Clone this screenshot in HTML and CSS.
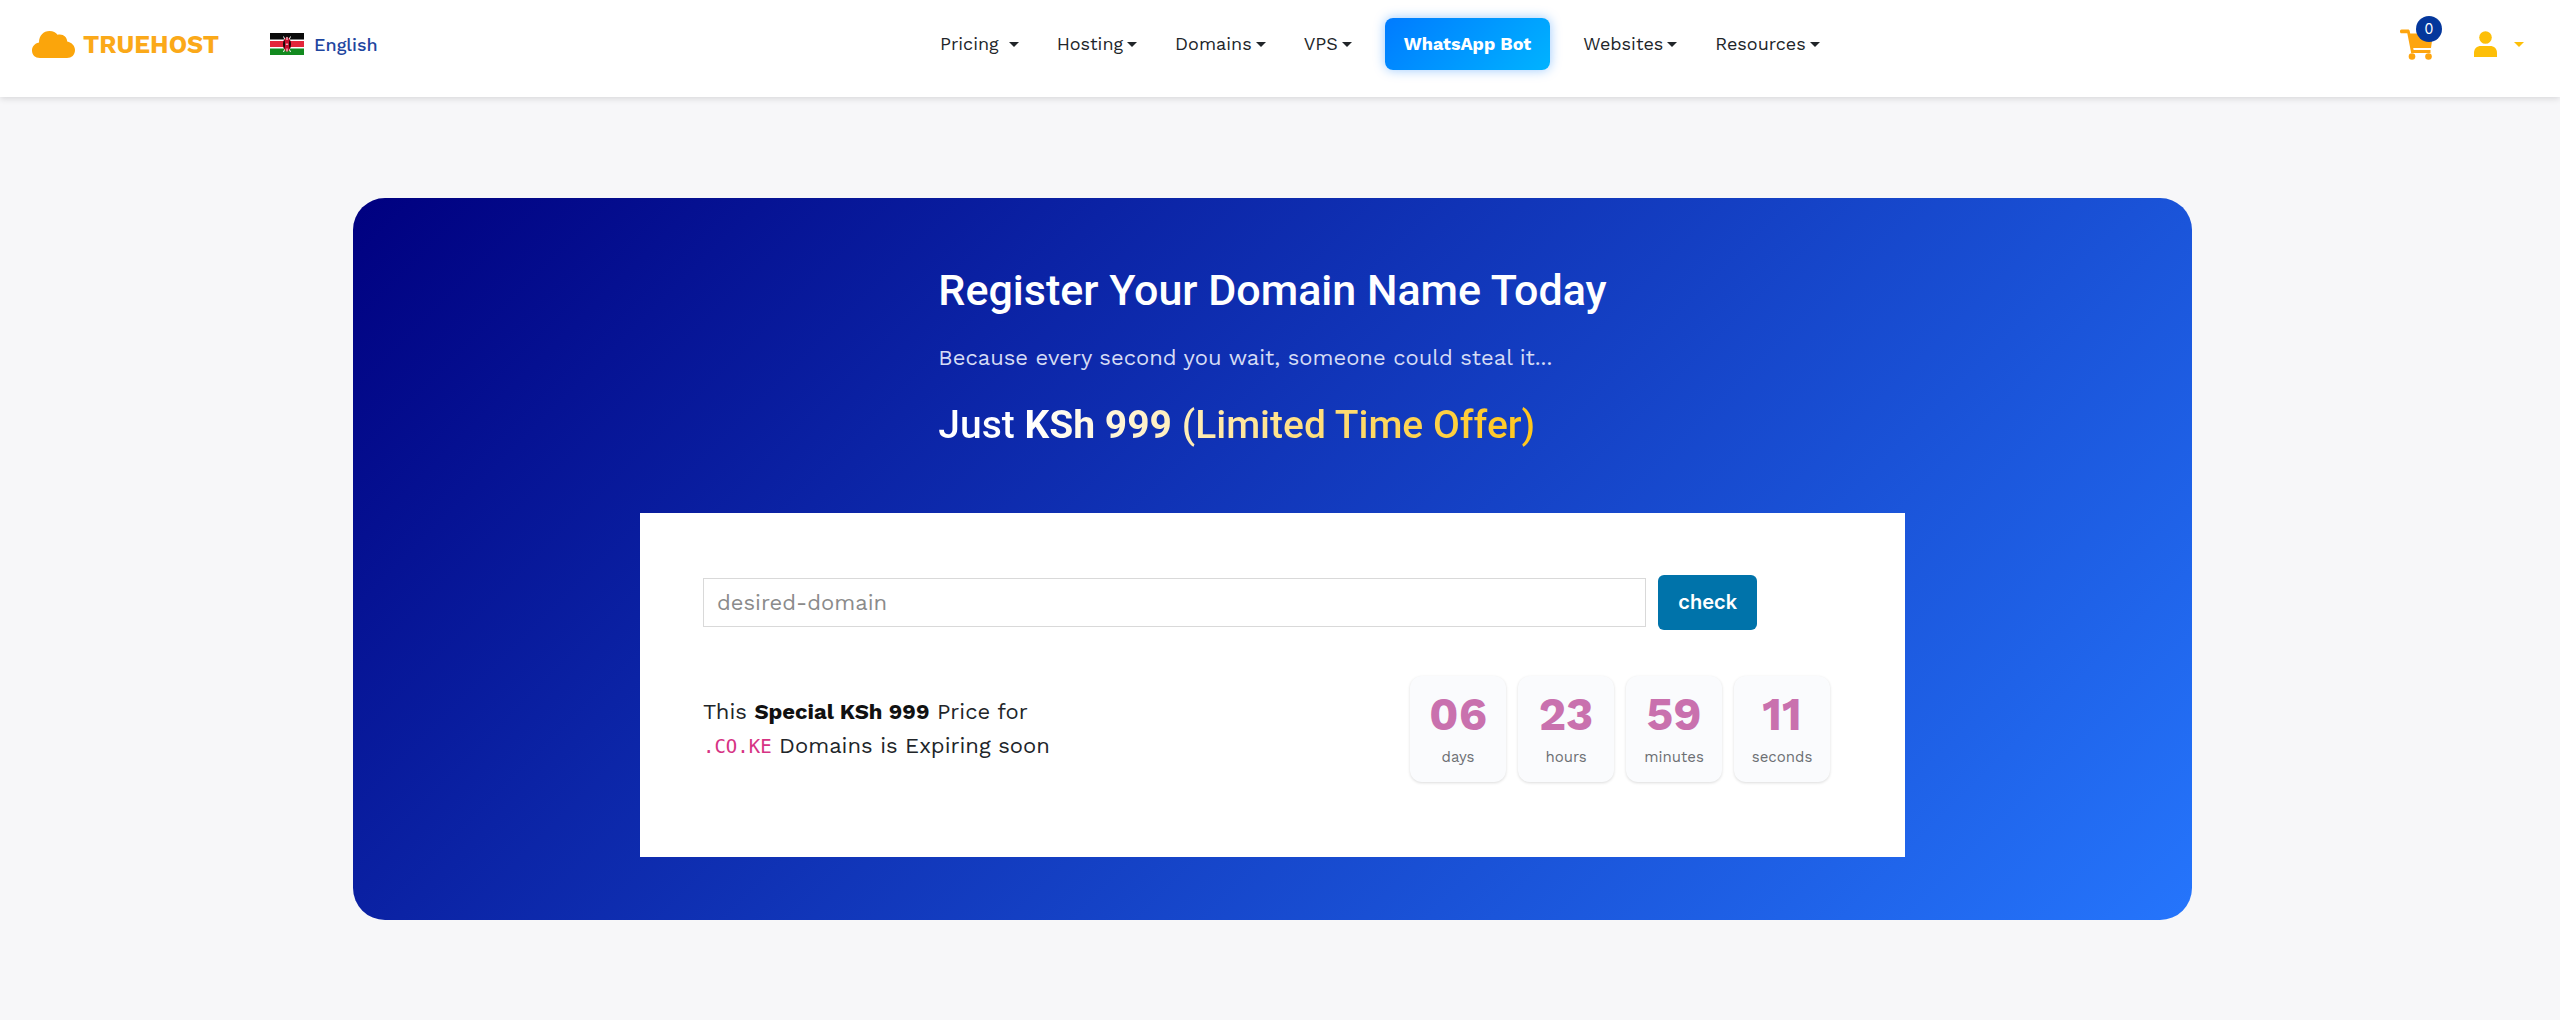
FILE: index.html
```html
<!DOCTYPE html>
<html lang="en">

<head>
    <meta charset="UTF-8">
    <meta name="viewport" content="width=device-width, initial-scale=1.0">
    <title>Register Your Domain Name Today - Truehost</title>
    <link rel="stylesheet" href="styles.css">
</head>

<body>
    <header class="navbar">
        <div class="nav-left">
            <a href="#" class="logo">
                <svg class="logo-cloud" viewBox="0 0 43 27" aria-hidden="true">
                    <path fill="#fba50b" d="M8 27C3 27 0 24 0 19.500C0 15.500 2.500 12.500 7 11.500C7 4.500 11.500 0 17.500 0C21 0 24 1.300 25.500 3.800C31 2.500 35 6 35.200 10.500C40 11.500 43 15 43 19C43 24 39.500 27 35 27Z" />
                </svg>
                <span>TRUEHOST</span>
            </a>
            <a href="#" class="language">
                <svg class="flag" viewBox="0 0 34 22" aria-hidden="true">
                    <rect width="34" height="22" fill="#fff" />
                    <rect width="34" height="6.500" fill="#0b0b0b" />
                    <rect y="8" width="34" height="6" fill="#e3263a" />
                    <rect y="15.500" width="34" height="6.500" fill="#128a1f" />
                    <path d="M13.500 3.500L20.500 19M20.500 3.500L13.500 19" stroke="#fff" stroke-width="1" />
                    <path d="M17 3.500C14 6 13 8.500 13 11.200C13 14 14 16.500 17 19C20 16.500 21 14 21 11.200C21 8.500 20 6 17 3.500Z" fill="#c8102e" />
                    <path d="M14.300 6.500C12.600 9.500 12.600 13 14.300 16C15.300 13 15.300 9.500 14.300 6.500ZM19.700 6.500C21.400 9.500 21.400 13 19.700 16C18.700 13 18.700 9.500 19.700 6.500Z" fill="#160808" />
                    <path d="M17 4V7M17 15.500V18.500M15.800 11.200H18.200" stroke="#fff" stroke-width="1" />
                </svg>
                <span>English</span>
            </a>
        </div>

        <nav class="menu">
            <a href="#" class="caret wide">Pricing</a>
            <a href="#" class="caret">Hosting</a>
            <a href="#" class="caret">Domains</a>
            <a href="#" class="caret">VPS</a>
            <a href="#" class="whatsapp">WhatsApp Bot</a>
            <a href="#" class="caret">Websites</a>
            <a href="#" class="caret">Resources</a>
        </nav>

        <div class="nav-right">
            <a href="#" class="cart" aria-label="Cart">
                <svg width="34" height="31" viewBox="0 0 34 31" aria-hidden="true">
                    <path fill="#fda50f" d="M1.500 0.500H8C9 0.500 9.500 1 9.700 2L10.200 4.500H33L31 19H13.200L13.600 21H30.500V24H11.200L7.300 4.200H1.500C0.500 4.200 0 3.500 0 2.400C0 1.200 0.500 0.500 1.500 0.500Z" />
                    <circle cx="12" cy="27.500" r="3.300" fill="#fda50f" />
                    <circle cx="28.500" cy="27.500" r="3.300" fill="#fda50f" />
                </svg>
                <span class="badge">0</span>
            </a>
            <a href="#" class="account caret" aria-label="Account">
                <svg width="23" height="26" viewBox="0 0 23 26" aria-hidden="true">
                    <circle cx="11.500" cy="6.500" r="6.300" fill="#fdbf08" />
                    <path fill="#fdbf08" d="M0 26V22C0 17.500 3 15 7 15H16C20 15 23 17.500 23 22V26Z" />
                </svg>
            </a>
        </div>
    </header>

    <main>
        <section class="hero">
            <div class="intro">
                <h1>Register Your Domain Name Today</h1>
                <p>Because every second you wait, someone could steal it...</p>
                <h2>Just <strong>KSh 999</strong> (Limited Time Offer)</h2>
            </div>

            <div class="box">
                <form action="#" class="search">
                    <input type="text" name="domain" id="domain" placeholder="desired-domain" aria-label="Domain name">
                    <button type="submit">check</button>
                </form>

                <div class="offer">
                    <p>This <strong>Special KSh 999</strong> Price for<br>
                        <code>.CO.KE</code> Domains is Expiring soon</p>

                    <div class="countdown">
                        <div class="unit"><b>06</b><span>days</span></div>
                        <div class="unit"><b>23</b><span>hours</span></div>
                        <div class="unit"><b>59</b><span>minutes</span></div>
                        <div class="unit"><b>11</b><span>seconds</span></div>
                    </div>
                </div>
            </div>
        </section>
    </main>
</body>

</html>
```
FILE: styles.css
```css
* {
    margin: 0;
    padding: 0;
    box-sizing: border-box;
}

body {
    font-family: "Work Sans", Inter, sans-serif;
    font-size: 22px;
    color: #212529;
    background-color: #f7f7f9;
}

a {
    text-decoration: none;
    color: inherit;
}

/* navbar */
.navbar {
    display: flex;
    align-items: center;
    padding: 18px 36px 27px 32px;
    background-color: #fff;
    box-shadow: 0 2px 6px rgba(0, 0, 0, 0.12);
}

.nav-left {
    display: flex;
    align-items: center;
    gap: 51px;
    width: 889px;
}

.logo {
    display: flex;
    align-items: center;
    gap: 8px;
    font-size: 25px;
    font-weight: 700;
    color: #fba919;
}

.logo-cloud {
    width: 43px;
    height: 27px;
}

.language {
    display: flex;
    align-items: center;
    gap: 10px;
    font-size: 18px;
    font-weight: 500;
    color: #1f469f;
}

.flag {
    width: 34px;
    height: 22px;
}

.menu {
    display: flex;
    align-items: center;
    font-size: 18px;
}

.menu a {
    padding: 0 19px;
    line-height: 52px;
}

.caret {
    display: flex;
    align-items: center;
    gap: 4px;
}

.caret::after {
    content: "";
    border-top: 5px solid currentColor;
    border-left: 5px solid transparent;
    border-right: 5px solid transparent;
}

.menu .wide {
    gap: 10px;
}

.menu .whatsapp {
    margin: 0 14px;
    border-radius: 8px;
    color: #fff;
    font-weight: 700;
    background: linear-gradient(135deg, #007bff, #00b3ff);
    box-shadow: 0 0 12px rgba(0, 123, 255, 0.4);
}

.nav-right {
    display: flex;
    align-items: center;
    gap: 40px;
    margin-left: auto;
}

.cart {
    position: relative;
    display: flex;
}

.badge {
    position: absolute;
    top: -13px;
    right: -8px;
    width: 26px;
    border-radius: 50%;
    line-height: 26px;
    font-family: Inter, sans-serif;
    font-size: 14px;
    text-align: center;
    color: #fff;
    background-color: #04379c;
}

.account {
    gap: 17px;
    color: #fdbf08;
}

/* hero */
main {
    padding: 101px 15px 100px 0;
}

.hero {
    width: 72.25%;
    min-width: 1300px;
    margin: auto;
    padding: 64px 0 63px;
    border-radius: 32px;
    background: linear-gradient(135deg, #000080, #2575fc);
}

.intro {
    width: fit-content;
    margin: 0 auto 61px;
    color: #fff;
}

h1,
h2 {
    font-family: Roboto, sans-serif;
    font-weight: 500;
}

h1 {
    font-size: 43px;
    line-height: 56px;
}

.intro p {
    margin: 23px 0 24px;
    line-height: 34px;
    color: #d5dcf5;
}

h2 {
    width: fit-content;
    font-size: 39px;
    line-height: 53px;
    color: transparent;
    background: linear-gradient(90deg, #fff 15%, #ffc61a);
    background-clip: text;
}

.box {
    width: 68.8%;
    margin: auto;
    padding: 62px 75px 75px 63px;
    background-color: #fff;
}

.search {
    display: flex;
    align-items: center;
    gap: 12px;
    margin-bottom: 46px;
}

.search input {
    width: 83.7%;
    height: 49px;
    padding: 0 13px;
    border: 1px solid #d9d9d9;
    font: inherit;
}

.search input::placeholder {
    color: #8b8b8b;
}

.search button {
    padding: 0 20px;
    border: none;
    border-radius: 6px;
    font-family: Inter, sans-serif;
    font-size: 20px;
    line-height: 55px;
    font-weight: 600;
    color: #fff;
    background-color: #0073aa;
}

.offer {
    display: flex;
    justify-content: space-between;
    align-items: center;
    line-height: 34px;
}

.offer strong {
    color: #111;
}

code {
    font-family: "DejaVu Sans Mono", monospace;
    font-size: 19px;
    color: #d63384;
}

.countdown {
    display: flex;
    gap: 12px;
}

.unit {
    display: flex;
    flex-direction: column;
    align-items: center;
    width: 96px;
    padding: 14px 0 6px;
    border-radius: 12px;
    background-color: #fafbfd;
    box-shadow: 0 1px 3px rgba(0, 0, 0, 0.14);
}

.unit b {
    font-size: 46px;
    line-height: 48px;
    color: #c971ae;
}

.unit span {
    font-size: 15px;
    line-height: 38px;
    color: #6c6f73;
}
```
